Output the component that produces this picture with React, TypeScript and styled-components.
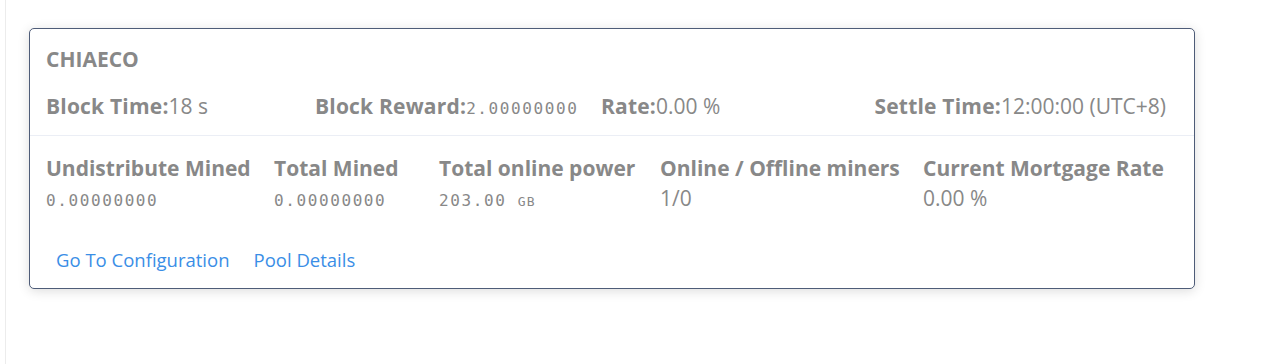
import React from "react";
import styled, { createGlobalStyle } from "styled-components";

const Global = createGlobalStyle`
  html, body { margin: 0; padding: 0; background: #ffffff; }
  body { font-family: "Open Sans", "Noto Sans", Arial, sans-serif; }
`;

const Page = styled.div`
  margin-left: 5px;
  border-left: 1px solid #ececec;
  height: 364px;
  box-sizing: border-box;
  padding: 28px 0 0 23px;
`;

const Card = styled.div`
  width: 1166px;
  box-sizing: border-box;
  border: 1px solid #4e5c78;
  border-radius: 5px;
  background: #fff;
  box-shadow: 0 2px 12px rgba(0, 0, 0, 0.14);
  color: #888888;
`;

const Header = styled.div`
  padding: 16px 16px 12px 16px;
  border-bottom: 1px solid #ebeef5;
  display: flex;
  flex-direction: column;
  gap: 19px;
`;

const Title = styled.div`
  font-size: 21px;
  line-height: 28px;
  font-weight: 700;
`;

const InfoRow = styled.div`
  display: grid;
  grid-template-columns: 269px 286px 1fr auto;
  font-size: 21px;
  line-height: 28px;
  white-space: nowrap;
`;

const Info = styled.div<{ $end?: boolean }>`
  ${(p) => (p.$end ? "margin-right: 12px;" : "")}
`;

const Label = styled.span`
  font-weight: 700;
  letter-spacing: 0.2px;
`;

const Mono = styled.span<{ $small?: boolean }>`
  font-family: "DejaVu Sans Mono", "Liberation Mono", monospace;
  font-size: ${(p) => (p.$small ? "13px" : "16px")};
  letter-spacing: ${(p) => (p.$small ? "1.2px" : "1.6px")};
`;

const Body = styled.div`
  padding: 18px 16px 8px 16px;
`;

const StatGrid = styled.div`
  display: grid;
  grid-template-columns: 204px 141px 197px 239px auto;
  column-gap: 24px;
  white-space: nowrap;
`;

const Stat = styled.div`
  display: flex;
  flex-direction: column;
  gap: 2px;
`;

const StatLabel = styled.div`
  font-size: 21px;
  line-height: 28px;
  font-weight: 700;
`;

const StatValue = styled.div`
  font-size: 21px;
  line-height: 28px;
`;

const Links = styled.div`
  display: flex;
  gap: 2px;
  margin-top: 24px;
  margin-left: -1px;
`;

const LinkButton = styled.a`
  font-size: 18.5px;
  line-height: 24px;
  padding: 8px 11px;
  color: #3a8ee6;
  text-decoration: none;
  cursor: pointer;
`;

export default function App() {
  return (
    <>
      <Global />
      <Page>
        <Card>
          <Header>
            <Title>CHIAECO</Title>
            <InfoRow>
              <Info>
                <Label>Block Time:</Label>18 s
              </Info>
              <Info>
                <Label>Block Reward:</Label>
                <Mono>2.00000000</Mono>
              </Info>
              <Info>
                <Label>Rate:</Label>0.00 %
              </Info>
              <Info $end>
                <Label>Settle Time:</Label>12:00:00 (UTC+8)
              </Info>
            </InfoRow>
          </Header>
          <Body>
            <StatGrid>
              <Stat>
                <StatLabel>Undistribute Mined</StatLabel>
                <StatValue>
                  <Mono>0.00000000</Mono>
                </StatValue>
              </Stat>
              <Stat>
                <StatLabel>Total Mined</StatLabel>
                <StatValue>
                  <Mono>0.00000000</Mono>
                </StatValue>
              </Stat>
              <Stat>
                <StatLabel>Total online power</StatLabel>
                <StatValue>
                  <Mono>203.00 </Mono>
                  <Mono $small>GB</Mono>
                </StatValue>
              </Stat>
              <Stat>
                <StatLabel>Online / Offline miners</StatLabel>
                <StatValue>1/0</StatValue>
              </Stat>
              <Stat>
                <StatLabel>Current Mortgage Rate</StatLabel>
                <StatValue>0.00 %</StatValue>
              </Stat>
            </StatGrid>
            <Links>
              <LinkButton>Go To Configuration</LinkButton>
              <LinkButton>Pool Details</LinkButton>
            </Links>
          </Body>
        </Card>
      </Page>
    </>
  );
}
